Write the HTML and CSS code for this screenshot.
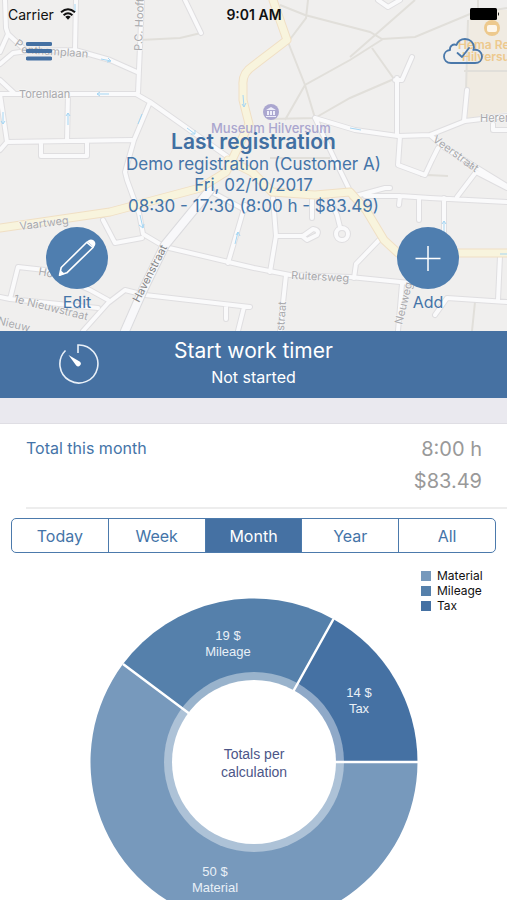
FILE: index.html
```html
<!DOCTYPE html>
<html lang="en">
<head>
<meta charset="utf-8">
<meta name="viewport" content="width=device-width, initial-scale=1">
<title>Work timer</title>
<link rel="stylesheet" href="styles.css">
</head>
<body>
<main class="screen">
  <header class="hero">
    <svg class="map" viewBox="0 0 507 331" preserveAspectRatio="xMidYMin slice" aria-hidden="true">
      <defs>
        <g id="streets">
          <path d="M0 64 13 53 27 51 75 50 110 60 137 72M5 0 6 28 8 34 24 49M8 34 0 52M76 0 75 50M142 0 138 93M0 94H136L150 102 228 157M0 80 14 93M0 94 7 142 0 150M7 142 132 140M68 94 67 141M41 142V156H87V142M150 102 134 140 125 172 127 180 139 213 143 234 165 247 254 268 290 275 350 277 410 283"/>
          <path d="M315 118 355 130 398 136 430 135 465 121 507 116M397 78V136M412 57 402 80 395 80M467 90 464 121M430 135 445 148 507 186M400 136 398 165 425 175 432 160 438 148M315 118 335 160 352 195M352 197 385 188 390 188M365 196 400 196 430 198 507 202M419 198V220M444 198V232M457 197 476 172 507 188M400 196 399 205M185 0M378 0 388 7 400 0M493 124V130H507"/>
          <path d="M273 198 276 236 270 272M276 236H303L313 229Q320 230 317 235L307 240 302 236M330 200 337 215 340 227M312 200V218M380 239 356 264 354 278M286 275 280 331M402 284 398 331M435 315 447 298 507 302M500 256 498 300M0 297 10 299 18 267 45 270 90 290 108 300M10 299 98 308M83 331 108 303 125 290 145 295 250 307M226 307V319M244 307 238 331M103 220 115 243 142 238M245 205 228 263M208 190 245 210"/>
          <circle cx="342" cy="234" r="6"/>
        </g>
        <path id="haven" d="M210 190 165 245 143 290 125 331"/>
        <path id="mainroads" d="M273 0 287 40 253 66Q242 73 243 85L243 100 249 124 232 160 226 172 200 188 110 212 0 228M228 160 252 172 272 192 315 195 350 192 366 210 384 240 398 253H507"/>
      </defs>
      <rect class="map-land" width="507" height="331"/>
      <path class="map-shop" d="M470 10H507V112L465 119Z"/>
      <path class="map-lane" d="M280 5 305 15 370 32 382 39 415 37 470 14 507 8M288 42 305 85 315 118M415 0 350 57M383 39 350 60 305 85 285 120M315 118 350 98 394 79 372 48M308 0 306 18 288 42M270 119 315 118M140 40 180 38 201 33M420 176 428 175 448 176M475 302 472 331M478 0V20M468 20 466 90M464 71H507M270 158H330"/>
      <g class="road-edge"><use href="#streets"/></g>
      <g class="road-fill"><use href="#streets"/></g>
      <path class="road-edge" d="M185 0 201 33"/><path class="road-fill" d="M185 0 201 33"/>
      <use href="#haven" class="wide-edge"/><use href="#haven" class="wide-fill"/>
      <use href="#mainroads" class="main-edge"/><use href="#mainroads" class="main-fill"/>
      <path class="map-arrow" d="M101 59 111 61M108 58 111 61 107 62M109 94H97M100 92 97 94 100 96M187 128 195 134M195 130V134H191M3 112V124M1 121 3 124 5 121M68 125V113M66 116 68 113 70 116M138 124 142 114M243 95 244 107M242 104 244 107 246 103M350 128 361 130M140 215 143 228M139 225 143 228 144 224M235 244 238 232M236 235 238 232 240 236M444 232V221M442 224 444 221 446 224M500 254H507M75 4V12"/>
      <g class="map-text">
        <text transform="translate(14 45) rotate(35)">P</text>
        <text x="21" y="53" transform="rotate(4 21 53)">enthamplaan</text>
        <text x="19" y="98">Torenlaan</text>
        <text transform="translate(142 51) rotate(-88)">P.C. Hooftweg</text>
        <text transform="translate(20 230) rotate(-7)">Vaartweg</text>
        <text transform="translate(38 275) rotate(10)">Hoo</text>
        <text transform="translate(13 302) rotate(14)">1e Nieuwstraat</text>
        <text transform="translate(-3 324) rotate(14)">Nieuw</text>
        <text x="291" y="279" transform="rotate(3 291 279)">Ruitersweg</text>
        <text transform="translate(284 331) rotate(-86)">straat</text>
        <text transform="translate(402 325) rotate(-76)">Neuweg</text>
        <text x="480" y="122">Heren</text>
        <text transform="translate(432 141) rotate(36)">Veerstraat</text>
        <text transform="translate(463 164) rotate(35)">at</text>
        <text class="map-strong" transform="translate(139 303) rotate(-63)">Havenstraat</text>
      </g>
      <g class="map-place">
        <circle cx="271" cy="112" r="8"/>
        <path d="M266 110 271 107 276 110ZM267 111H269V115H267ZM270 111H272V115H270ZM273 111H275V115H273ZM266 116H276V117H266Z" fill="#eeeefa"/>
        <text x="211" y="133">Museum Hilversum</text>
      </g>
      <g class="map-store">
        <circle cx="492" cy="28" r="8"/>
        <rect x="487" y="25" width="10" height="7" rx="2" fill="#fdf6ea"/>
        <text x="458" y="49">Hema Re</text>
        <text x="462" y="61">Hilversum</text>
      </g>
    </svg>

    <div class="status">
      <span class="carrier">Carrier
        <svg width="16" height="12" viewBox="0 0 16 12" aria-hidden="true"><path d="M1 4.300Q8-1.700 15 4.300M3.600 7.200Q8 3.300 12.400 7.200" fill="none" stroke="#111" stroke-width="2"/><path d="M8 11.800 5.300 8.800Q8 6.800 10.700 8.800Z" fill="#111"/></svg>
      </span>
      <span class="clock">9:01 AM</span>
      <svg class="battery" width="30" height="12" viewBox="0 0 30 12" aria-hidden="true"><rect width="27" height="12" rx="1.500"/><path d="M28 4Q30 6 28 8Z"/></svg>
    </div>

    <nav class="bar">
      <button class="icon-button" type="button" aria-label="Menu">
        <svg width="26" height="20" viewBox="0 0 26 20"><path d="M1.500 3H24.500M1.500 10H24.500M1.500 17.500H24.500" stroke="#4571a3" stroke-width="3.800" stroke-linecap="round"/></svg>
      </button>
      <button class="icon-button" type="button" aria-label="Sync status">
        <svg width="40" height="26" viewBox="0 0 40 26" fill="none" stroke="#4a78aa" stroke-width="1.800" stroke-linecap="round" stroke-linejoin="round"><path d="M8 25C3.500 25 1 22 1 18.500C1 15 3.500 12.200 7 12C6.500 8 10 5.500 13.500 7C15 3 18.500 1 22 1C27 1 31 4.500 31 9.500C30.900 10.500 30.600 11.300 30.300 12C35.500 10.700 39 14.500 39 18.500C39 22 36.500 25 32 25Z"/><path d="M14.500 15 19 19 26 10"/></svg>
      </button>
    </nav>

    <section class="last">
      <h1>Last registration</h1>
      <p>Demo registration (Customer A)</p>
      <p>Fri, 02/10/2017</p>
      <p>08:30 - 17:30 (8:00 h - $83.49)</p>
    </section>

    <div class="actions">
      <button class="action" type="button">
        <svg width="62" height="62" viewBox="0 0 62 62" aria-hidden="true"><circle cx="31" cy="31" r="31" fill="#4f7eaf"/><path d="M13.500 48.300 15.200 40.500 40.800 15.300 47 20.500 20.800 45.800Z" fill="none" stroke="#fff" stroke-width="1.600" stroke-linejoin="round"/><path d="M40.600 15C42.500 12.300 45.500 11.600 47.800 13.600S49.800 18.600 47.300 20.800C46 18 43.500 15.800 40.600 15ZM13 49 14.500 43.200 18.800 46.800Z" fill="#fff"/></svg>
        <span>Edit</span>
      </button>
      <button class="action" type="button">
        <svg width="62" height="62" viewBox="0 0 62 62" aria-hidden="true"><circle cx="31" cy="31" r="31" fill="#4f7eaf"/><path d="M18.500 31.500H43.500M31 19V44" stroke="#fff" stroke-width="1.500"/></svg>
        <span>Add</span>
      </button>
    </div>
  </header>

  <button class="timer" type="button">
    <svg width="42" height="42" viewBox="0 0 42 42" aria-hidden="true"><path d="M8.500 7.500A19 19 0 1 0 21 2V10" fill="none" stroke="#e9f0f8" stroke-width="1.600"/><path d="M11.500 12 23 18.800A2.600 2.600 0 0 1 19.200 22.600Z" fill="#fff"/></svg>
    <span class="timer-text"><span class="timer-title">Start work timer</span><span class="timer-state">Not started</span></span>
  </button>

  <section class="totals">
    <h2>Total this month</h2>
    <div class="amounts"><span>8:00 h</span><span>$83.49</span></div>
  </section>

  <div class="periods" role="group" aria-label="Period">
    <button type="button">Today</button>
    <button type="button">Week</button>
    <button type="button" class="active" aria-pressed="true">Month</button>
    <button type="button">Year</button>
    <button type="button">All</button>
  </div>

  <section class="chart">
    <svg class="donut" width="328" height="328" viewBox="0 0 328 328" role="img" aria-label="Totals per calculation">
      <path fill="#7799bc" d="M164 164H327.500A163.500 163.500 0 1 1 33 66Z"/>
      <path fill="#5580ab" d="M164 164 33 66A163.500 163.500 0 0 1 243.500 21.200Z"/>
      <path fill="#4571a3" d="M164 164 243.500 21.200A163.500 163.500 0 0 1 327.500 164Z"/>
      <circle cx="164" cy="164" r="90" fill="#fff" fill-opacity=".4"/>
      <path d="M164 164H328M164 164 33 66M164 164 243.500 21" stroke="#fff" stroke-width="2.500"/>
      <circle cx="164" cy="164" r="82" fill="#fff"/>
      <g class="slice-label">
        <text x="138" y="42">19 $</text><text x="138" y="58">Mileage</text>
        <text x="269" y="99">14 $</text><text x="269" y="115">Tax</text>
        <text x="125" y="278">50 $</text><text x="125" y="294">Material</text>
      </g>
      <g class="center-label"><text x="164" y="161">Totals per</text><text x="164" y="179">calculation</text></g>
    </svg>
    <ul class="legend">
      <li class="material">Material</li>
      <li class="mileage">Mileage</li>
      <li class="tax">Tax</li>
    </ul>
  </section>
</main>
</body>
</html>
```
FILE: styles.css
```css
* { box-sizing: border-box; }
body { margin: 0; background: #fff; color: #4474a8; font-family: Inter, "Liberation Sans", sans-serif; }
h1, h2, p, ul { margin: 0; padding: 0; }
button { margin: 0; padding: 0; border: 0; background: none; color: inherit; font: inherit; cursor: pointer; }
svg { display: block; }

.screen { display: flex; flex-direction: column; height: 100vh; overflow: hidden; }
.screen > * { flex-shrink: 0; }

.hero { position: relative; isolation: isolate; overflow: hidden; padding-bottom: 19px; }
.map { position: absolute; inset: 0; z-index: -1; width: 100%; height: 100%; }
.map-land { fill: #f0efee; }
.map-shop { fill: #f0ebe2; }
.map-lane { fill: none; stroke: #e1dfda; stroke-width: 2; }
.road-edge, .road-fill, .wide-edge, .wide-fill, .main-edge, .main-fill { fill: none; stroke-linejoin: round; stroke-linecap: round; }
.road-edge { stroke: #dfdee0; stroke-width: 6; }
.road-fill { stroke: #fafafb; stroke-width: 4; }
.wide-edge { stroke: #dbdbde; stroke-width: 10; }
.wide-fill { stroke: #f8f8fa; stroke-width: 8; }
.main-edge { stroke: #f0dfc4; stroke-width: 9; }
.main-fill { stroke: #f8f4dd; stroke-width: 7; }
.map-arrow { fill: none; stroke: #a5d6f3; stroke-width: 1; }
.map-text { fill: #a9a9ac; font-size: 11px; paint-order: stroke; stroke: #f6f6f6; stroke-width: 1px; }
.map-strong { fill: #858588; }
.map-place { fill: #aaa6cf; font-size: 13px; font-weight: 500; }
.map-store { fill: #edc98d; font-size: 12px; font-weight: 600; }

.status { display: grid; grid-template-columns: 1fr auto 1fr; align-items: center; height: 28px; padding: 0 7px 0 8px; color: #111; font-size: 14px; }
.carrier { display: flex; align-items: center; gap: 6px; }
.clock { font-weight: 600; }
.battery { justify-self: end; }
.bar { display: flex; justify-content: space-between; align-items: center; height: 48px; padding: 0 24px 2px 26px; }
.last { padding-top: 54px; text-align: center; font-size: 17px; line-height: 21px; }
.last h1 { font-size: 21px; line-height: 24px; font-weight: 600; color: #416fa2; }
.actions { display: flex; justify-content: space-between; padding: 10px 48px 0 46px; }
.action { display: flex; flex-direction: column; align-items: center; gap: 3px; font-size: 16px; line-height: 20px; }

.timer { display: grid; grid-template-columns: 1fr auto 1fr; align-items: center; padding: 6px 0 8px 57px; background: #4671a2; color: #fff; }
.timer-text { display: flex; flex-direction: column; align-items: center; margin-left: -57px; }
.timer-title { font-size: 21px; line-height: 27px; }
.timer-state { font-size: 16px; line-height: 26px; }

.totals { position: relative; display: flex; justify-content: space-between; margin: 25px 0 0 26px; padding: 10px 25px 10px 0; border-bottom: 2px solid #ededed; }
.totals::before { content: ""; position: absolute; top: -25px; left: -26px; right: 0; height: 25px; background: #eae9ef; border-bottom: 1px solid #dfdee4; }
.totals h2 { font-size: 16px; line-height: 30px; font-weight: 400; }
.amounts { display: flex; flex-direction: column; align-items: flex-end; color: #999; font-size: 20px; line-height: 32px; }

.periods { display: flex; margin: 9px 11px 0; border: 1px solid #4c7aac; border-radius: 5px; overflow: hidden; }
.periods button { flex: 1; height: 33px; font-size: 16px; }
.periods button + button { border-left: 1px solid #4c7aac; }
.periods .active { background: #4571a3; color: #fff; }

.chart { display: grid; flex: 1 1 0; min-height: 0; overflow: hidden; padding-top: 15px; }
.donut { grid-area: 1 / 1; justify-self: center; margin-top: 30px; }
.slice-label, .center-label { font-family: "Liberation Sans", sans-serif; text-anchor: middle; }
.slice-label { fill: #e9f0f7; font-size: 13px; }
.center-label { fill: #4c5688; font-size: 14px; }
.legend { grid-area: 1 / 1; justify-self: end; align-self: start; width: 86px; list-style: none; color: #111; font-size: 12px; line-height: 15px; }
.legend li { display: flex; align-items: center; gap: 6px; }
.legend li::before { content: ""; width: 10px; height: 10px; background: #7799bc; }
.legend .mileage::before { background: #5580ab; }
.legend .tax::before { background: #4571a3; }
```
